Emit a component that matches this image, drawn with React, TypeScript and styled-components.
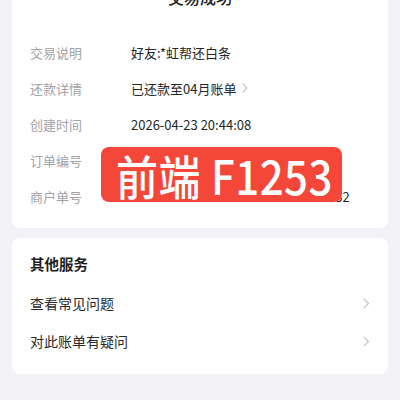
import React from 'react';
import styled, { createGlobalStyle } from 'styled-components';

const GlobalStyle = createGlobalStyle`
    html, body {
        margin: 0;
        padding: 0;
        background: #f3f3f7;
        overflow: hidden;
    }
    body {
        font-family: "Noto Sans CJK SC", "Noto Sans", sans-serif;
    }
`

const Page = styled.div`
    position: relative;
    width: 400px;
    height: 400px;
    padding: 0 12px;
    box-sizing: border-box;
    display: flex;
    flex-direction: column;
    gap: 10px;
`

const Card = styled.div<{ $pull?: number }>`
    background: #ffffff;
    border-radius: 8px;
    margin-top: ${p => (p.$pull ? `-${p.$pull}px` : '0')};
    padding: 0 18px 14px 18px;
    display: flex;
    flex-direction: column;
`

const StatusTitle = styled.div`
    height: 22px;
    line-height: 22px;
    font-size: 16px;
    font-weight: 500;
    color: #222;
    text-align: center;
    margin-bottom: 26px;
`

const InfoRow = styled.div`
    display: flex;
    align-items: center;
    height: 36px;
    font-size: 13px;
`

const Label = styled.span`
    width: 101px;
    flex-shrink: 0;
    color: #a2a2a6;
`

const Value = styled.span`
    color: #262626;
    white-space: nowrap;
    display: flex;
    align-items: center;
`

const ArrowWrap = styled.span`
    display: flex;
    margin-left: 6px;
`

const SectionTitle = styled.div`
    height: 24px;
    line-height: 24px;
    font-size: 14.5px;
    font-weight: 700;
    color: #1f1f1f;
    margin: 14px 0 8px;
`

const LinkRow = styled.div`
    display: flex;
    align-items: center;
    justify-content: space-between;
    height: 38px;
    font-size: 14px;
    color: #2a2a2a;
`

const Badge = styled.div`
    position: absolute;
    left: 101px;
    top: 147px;
    width: 241px;
    height: 55px;
    border-radius: 8px;
    background: #f4473a;
    color: #fff;
    display: flex;
    align-items: center;
    justify-content: center;
    white-space: nowrap;
`

const BadgeText = styled.span`
    font-size: 42px;
    font-weight: 500;
    line-height: 1;
    letter-spacing: 0.5px;
    transform: scaleY(1.12);
    margin-left: 6px;
`

const Chevron = ({ size = 10, color = '#c4c4c8' }: { size?: number; color?: string }) => (
    <svg width={size * 0.6} height={size} viewBox="0 0 6 10" fill="none">
        <path d="M1 1 L5 5 L1 9" stroke={color} strokeWidth="1.1" strokeLinecap="round" strokeLinejoin="round" />
    </svg>
)

const App = () => {
    return (
        <>
            <GlobalStyle />
            <Page>
                <Card $pull={14}>
                    <StatusTitle>交易成功</StatusTitle>
                    <InfoRow>
                        <Label>交易说明</Label>
                        <Value>好友:*虹帮还白条</Value>
                    </InfoRow>
                    <InfoRow>
                        <Label>还款详情</Label>
                        <Value>已还款至04月账单<ArrowWrap><Chevron size={10} /></ArrowWrap></Value>
                    </InfoRow>
                    <InfoRow>
                        <Label>创建时间</Label>
                        <Value>2026-04-23 20:44:08</Value>
                    </InfoRow>
                    <InfoRow>
                        <Label>订单编号</Label>
                        <Value>2026042322001411570512345678</Value>
                    </InfoRow>
                    <InfoRow>
                        <Label>商户单号</Label>
                        <Value>H20260423204408008716541237032</Value>
                    </InfoRow>
                </Card>
                <Card>
                    <SectionTitle>其他服务</SectionTitle>
                    <LinkRow>
                        <span>查看常见问题</span>
                        <Chevron size={11} />
                    </LinkRow>
                    <LinkRow>
                        <span>对此账单有疑问</span>
                        <Chevron size={11} />
                    </LinkRow>
                </Card>
                <Badge>
                    <BadgeText>前端 F1253</BadgeText>
                </Badge>
            </Page>
        </>
    );
}

export default App;
